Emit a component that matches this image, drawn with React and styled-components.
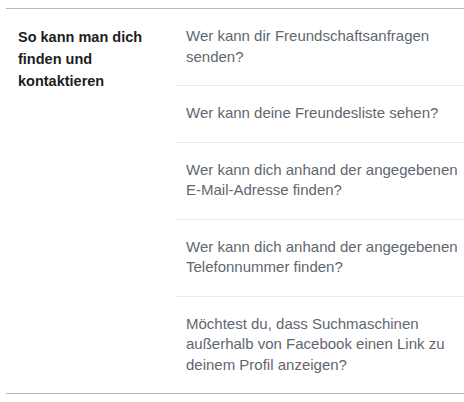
import React from "react";
import styled, { createGlobalStyle } from "styled-components";

const Global = createGlobalStyle`
  html, body { margin: 0; padding: 0; background: #fff; }
  body { font-family: "Liberation Sans", Arial, sans-serif; -webkit-font-smoothing: antialiased; }
`;

const Page = styled.div`
  padding: 8px 0 0 6px;
`;

const Section = styled.section`
  display: flex;
  border-top: 1px solid #b4b8bd;
  border-bottom: 1px solid #b4b8bd;
`;

const Heading = styled.h3`
  margin: 0;
  box-sizing: border-box;
  width: 170px;
  flex: none;
  padding: 17px 12px 0 12px;
  font-size: 14.5px;
  line-height: 22px;
  font-weight: 700;
  color: #1c1e21;
`;

const List = styled.div`
  flex: 1;
  display: flex;
  flex-direction: column;
`;

const Row = styled.div`
  padding: 17px 4px 18px 10px;
  font-size: 15px;
  line-height: 20.5px;
  color: #606770;
  & + & { border-top: 1px solid #e9eaec; }
`;

const items = [
  "Wer kann dir Freundschaftsanfragen senden?",
  "Wer kann deine Freundesliste sehen?",
  "Wer kann dich anhand der angegebenen E-Mail-Adresse finden?",
  "Wer kann dich anhand der angegebenen Telefonnummer finden?",
  "Möchtest du, dass Suchmaschinen außerhalb von Facebook einen Link zu deinem Profil anzeigen?",
];

export default function App() {
  return (
    <Page>
      <Global />
      <Section>
        <Heading>So kann man dich finden und kontaktieren</Heading>
        <List>
          {items.map((t) => (
            <Row key={t}>{t}</Row>
          ))}
        </List>
      </Section>
    </Page>
  );
}
